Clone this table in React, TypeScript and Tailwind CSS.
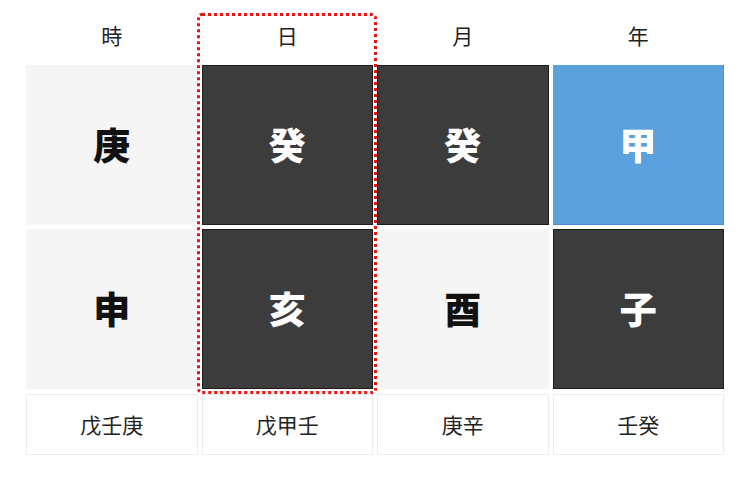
import type { ReactNode } from "react";

type Cell = { ch: string; tone: "light" | "dark" | "blue" };

const HEADERS = ["時", "日", "月", "年"];

const STEMS: Cell[] = [
  { ch: "庚", tone: "light" },
  { ch: "癸", tone: "dark" },
  { ch: "癸", tone: "dark" },
  { ch: "甲", tone: "blue" },
];

const BRANCHES: Cell[] = [
  { ch: "申", tone: "light" },
  { ch: "亥", tone: "dark" },
  { ch: "酉", tone: "light" },
  { ch: "子", tone: "dark" },
];

const HIDDEN = ["戊壬庚", "戊甲壬", "庚辛", "壬癸"];

// Literal class strings so Tailwind picks them up.
const TONE: Record<Cell["tone"], string> = {
  light: "bg-[#f5f5f5] text-[#111]",
  dark: "bg-[#3c3c3c] text-white border border-[#1c1c1c]",
  blue: "bg-[#5ba1dd] text-white border-r border-b border-[#4a8fd6]",
};

function Big({ cell }: { cell: Cell }) {
  return (
    <div className={`h-[160px] flex items-center justify-center text-[37px] font-black ${TONE[cell.tone]}`}>
      {cell.ch}
    </div>
  );
}

function Row({ children }: { children: ReactNode }) {
  return <div className="grid grid-cols-4 gap-[4px]">{children}</div>;
}

export default function App() {
  return (
    <div
      className="w-[750px] h-[480px] bg-white"
      style={{ fontFamily: '"Noto Sans CJK JP", "Noto Sans", sans-serif' }}
    >
      <div className="relative mx-[26px] pt-[10px] flex flex-col gap-[4px]">
        <Row>
          {HEADERS.map((h) => (
            <div key={h} className="h-[51px] flex items-center justify-center text-[21px] text-[#222]">
              {h}
            </div>
          ))}
        </Row>
        <Row>
          {STEMS.map((c, i) => (
            <Big key={i} cell={c} />
          ))}
        </Row>
        <Row>
          {BRANCHES.map((c, i) => (
            <Big key={i} cell={c} />
          ))}
        </Row>
        <div className="mt-[1px]">
          <Row>
            {HIDDEN.map((t) => (
              <div
                key={t}
                className="h-[61px] flex items-center justify-center border border-[#ececec] text-[21px] text-[#222]"
              >
                {t}
              </div>
            ))}
          </Row>
        </div>
        <div className="absolute left-[171px] top-[13px] w-[180px] h-[381px] border-[3px] border-dotted border-[#f01010] rounded-[5px] pointer-events-none" />
      </div>
    </div>
  );
}
